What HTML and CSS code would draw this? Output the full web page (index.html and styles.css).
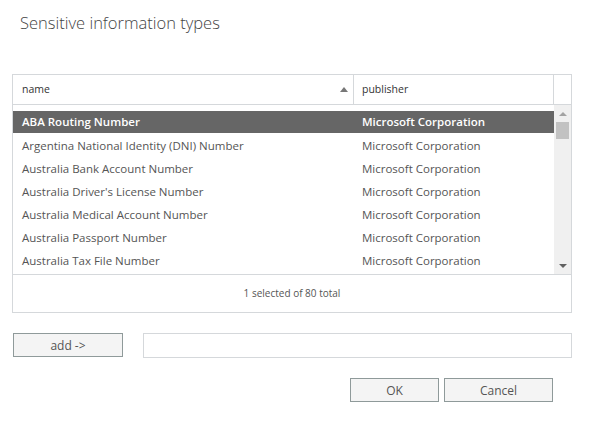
FILE: index.html
```html
<!DOCTYPE html>
<html>
<head>
<meta charset="utf-8">
<link rel="stylesheet" href="styles.css">
</head>
<body>
<div class="dialog">
  <h1 class="title">Sensitive information types</h1>
  <div class="grid">
    <div class="header">
      <div class="hcell name-col">name<span class="sort"></span></div>
      <div class="hcell pub-col">publisher</div>
      <div class="hcell spacer"></div>
    </div>
    <div class="body">
      <div class="rows">
        <div class="row selected"><div class="cell name-col">ABA Routing Number</div><div class="cell pub-col">Microsoft Corporation</div></div>
        <div class="row"><div class="cell name-col">Argentina National Identity (DNI) Number</div><div class="cell pub-col">Microsoft Corporation</div></div>
        <div class="row"><div class="cell name-col">Australia Bank Account Number</div><div class="cell pub-col">Microsoft Corporation</div></div>
        <div class="row"><div class="cell name-col">Australia Driver's License Number</div><div class="cell pub-col">Microsoft Corporation</div></div>
        <div class="row"><div class="cell name-col">Australia Medical Account Number</div><div class="cell pub-col">Microsoft Corporation</div></div>
        <div class="row"><div class="cell name-col">Australia Passport Number</div><div class="cell pub-col">Microsoft Corporation</div></div>
        <div class="row"><div class="cell name-col">Australia Tax File Number</div><div class="cell pub-col">Microsoft Corporation</div></div>
      </div>
      <div class="scrollbar">
        <span class="arrow up"></span>
        <span class="thumb"></span>
        <span class="track"></span>
        <span class="arrow down"></span>
      </div>
    </div>
    <div class="footer">1 selected of 80 total</div>
  </div>
  <div class="addrow">
    <button class="btn add">add -&gt;</button>
    <div class="field"></div>
  </div>
  <div class="actions">
    <button class="btn ok">OK</button>
    <button class="btn cancel">Cancel</button>
  </div>
</div>
</body>
</html>
```
FILE: styles.css
```css
html, body {
  margin: 0;
  padding: 0;
  background: #ffffff;
}
body {
  font-family: "Open Sans", "Noto Sans", sans-serif;
  color: #444444;
  width: 595px;
  height: 422px;
  overflow: hidden;
}
.dialog {
  padding-left: 12px;
  width: 560px;
}
.title {
  margin: 0 0 0 8px;
  padding-top: 11px;
  height: 74px;
  box-sizing: border-box;
  font-size: 16.5px;
  font-weight: 300;
  line-height: 24px;
  color: #444444;
}
.grid {
  border: 1px solid #d5d8db;
  width: 560px;
  box-sizing: border-box;
}
.header {
  display: flex;
  height: 30px;
  border-bottom: 1px solid #d5d8db;
  box-sizing: border-box;
}
.hcell {
  font-size: 10.5px;
  line-height: 29px;
  color: #333333;
  box-sizing: border-box;
}
.name-col {
  width: 341px;
  padding-left: 9px;
  box-sizing: border-box;
  flex: none;
}
.hcell.name-col {
  border-right: 1px solid #d5d8db;
  display: flex;
  justify-content: space-between;
  padding-right: 5px;
  align-items: center;
}
.pub-col {
  width: 200px;
  padding-left: 8px;
  box-sizing: border-box;
  flex: none;
}
.hcell.pub-col {
  border-right: 1px solid #d5d8db;
}
.spacer {
  flex: 1;
}
.sort {
  width: 0;
  height: 0;
  border-left: 4px solid transparent;
  border-right: 4px solid transparent;
  border-bottom: 5px solid #777777;
}
.body {
  display: flex;
  height: 170px;
  border-bottom: 1px solid #d5d8db;
  box-sizing: border-box;
}
.rows {
  width: 541px;
  padding-top: 6px;
  box-sizing: border-box;
}
.row {
  display: flex;
  height: 23px;
  font-size: 11.5px;
  line-height: 23px;
  color: #555555;
  white-space: nowrap;
}
.row.selected {
  background: #666666;
  color: #ffffff;
  font-weight: 600;
  height: 22px;
  line-height: 22px;
  margin-bottom: 1px;
}
.scrollbar {
  width: 17px;
  background: #f0f0f0;
  display: flex;
  flex-direction: column;
  align-items: center;
}
.arrow {
  width: 0;
  height: 0;
  border-left: 4px solid transparent;
  border-right: 4px solid transparent;
}
.arrow.up {
  margin-top: 7px;
  border-bottom: 4px solid #a3a3a3;
}
.arrow.down {
  margin-bottom: 6px;
  border-top: 4px solid #606060;
}
.thumb {
  margin-top: 6px;
  width: 13px;
  height: 17px;
  background: #c2c2c2;
}
.track {
  flex: 1;
}
.footer {
  height: 37px;
  line-height: 37px;
  text-align: center;
  font-size: 10px;
  color: #555555;
}
.addrow {
  display: flex;
  margin-top: 20px;
  padding-left: 1px;
}
.btn {
  font-family: "Open Sans", "Noto Sans", sans-serif;
  background: #f4f4f4;
  border: 1px solid #8f9a9a;
  color: #555555;
  font-size: 12px;
  height: 24px;
  padding: 0;
  margin: 0;
  box-sizing: border-box;
}
.add {
  width: 110px;
}
.field {
  margin-left: 20px;
  flex: 1;
  height: 25px;
  border: 1px solid #d5d8db;
  box-sizing: border-box;
}
.actions {
  display: flex;
  justify-content: flex-end;
  gap: 5px;
  margin-top: 20px;
  padding-right: 19px;
}
.ok {
  width: 89px;
}
.cancel {
  width: 109px;
}
```
